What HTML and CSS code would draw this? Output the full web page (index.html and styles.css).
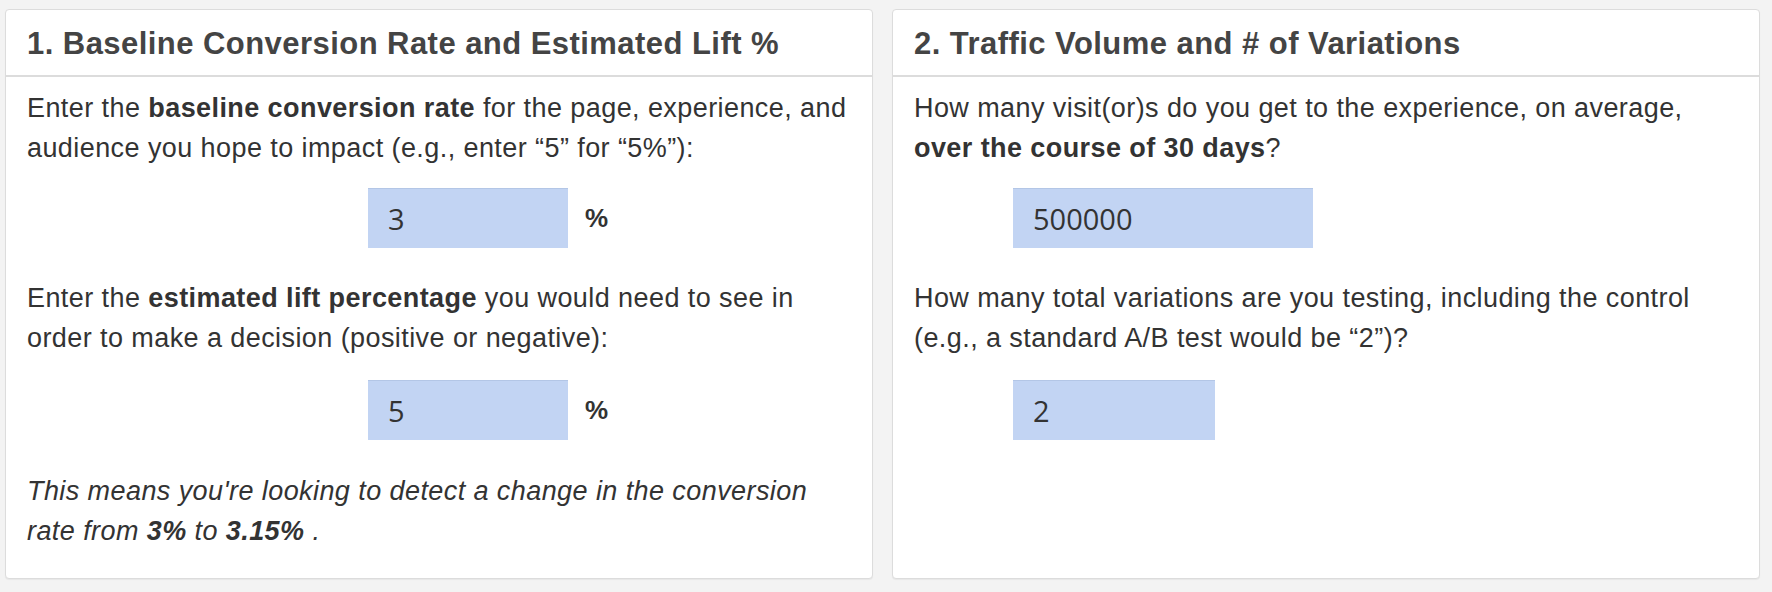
FILE: index.html
```html
<!DOCTYPE html>
<html>
<head>
<meta charset="utf-8">
<link rel="stylesheet" href="styles.css">
</head>
<body>
<div class="panels">
  <section class="card">
    <header class="card-head">1. Baseline Conversion Rate and Estimated Lift %</header>
    <div class="card-body">
      <p class="q">Enter the <b>baseline conversion rate</b> for the page, experience, and audience you hope to impact (e.g., enter “5” for “5%”):</p>
      <div class="field field-left gap-a">
        <div class="input w200">3</div>
        <span class="unit">%</span>
      </div>
      <p class="q gap-b">Enter the <b>estimated lift percentage</b> you would need to see in order to make a decision (positive or negative):</p>
      <div class="field field-left gap-c">
        <div class="input w200">5</div>
        <span class="unit">%</span>
      </div>
      <p class="q note gap-d">This means you're looking to detect a change in the conversion rate from <b>3%</b> to <b>3.15%</b> .</p>
    </div>
  </section>
  <section class="card">
    <header class="card-head">2. Traffic Volume and # of Variations</header>
    <div class="card-body">
      <p class="q">How many visit(or)s do you get to the experience, on average, <b>over the course of 30 days</b>?</p>
      <div class="field field-right gap-a">
        <div class="input w300">500000</div>
      </div>
      <p class="q gap-b">How many total variations are you testing, including the control (e.g., a standard A/B test would be “2”)?</p>
      <div class="field field-right gap-c">
        <div class="input w202">2</div>
      </div>
    </div>
  </section>
</div>
</body>
</html>
```

FILE: styles.css
```css
html, body {
  margin: 0;
  padding: 0;
  background: #f3f3f3;
}
body {
  font-family: "Liberation Sans", Arial, sans-serif;
  color: #333;
}
.panels {
  display: grid;
  grid-template-columns: 868px 868px;
  gap: 19px;
  padding: 9px 12px 12px 5px;
  align-items: stretch;
}
.card {
  background: #fff;
  border: 1px solid #dcdcdc;
  border-radius: 4px;
  box-shadow: 0 1px 1px rgba(0, 0, 0, 0.05);
}
.card-head {
  height: 67px;
  box-sizing: border-box;
  display: flex;
  align-items: center;
  padding: 3px 21px 0 21px;
  border-bottom: 2px solid #dcdcdc;
  font-size: 31px;
  letter-spacing: 0.45px;
  font-weight: bold;
  color: #444;
}
.card-body {
  padding: 11px 21px 27px 21px;
}
.q {
  margin: 0;
  font-size: 27px;
  letter-spacing: 0.42px;
  line-height: 40px;
}
.q b {
  font-weight: bold;
}
.note {
  font-style: italic;
}
.field {
  display: flex;
  align-items: center;
}
.field-left {
  padding-left: 341px;
}
.field-right {
  padding-left: 99px;
}
.gap-a { margin-top: 20px; }
.gap-b { margin-top: 30px; }
.gap-c { margin-top: 22px; }
.gap-d { margin-top: 31px; }
.input {
  height: 60px;
  box-sizing: border-box;
  background: #c2d4f3;
  border-top: 1px solid #b3c6e6;
  padding: 0 20px;
  display: flex;
  align-items: center;
  font-family: "Open Sans", "Noto Sans", sans-serif;
  font-size: 29px;
  color: #333;
}
.w200 { width: 200px; }
.w300 { width: 300px; }
.w202 { width: 202px; }
.unit {
  margin-left: 17px;
  font-size: 26px;
  font-weight: bold;
  color: #333;
}
```
